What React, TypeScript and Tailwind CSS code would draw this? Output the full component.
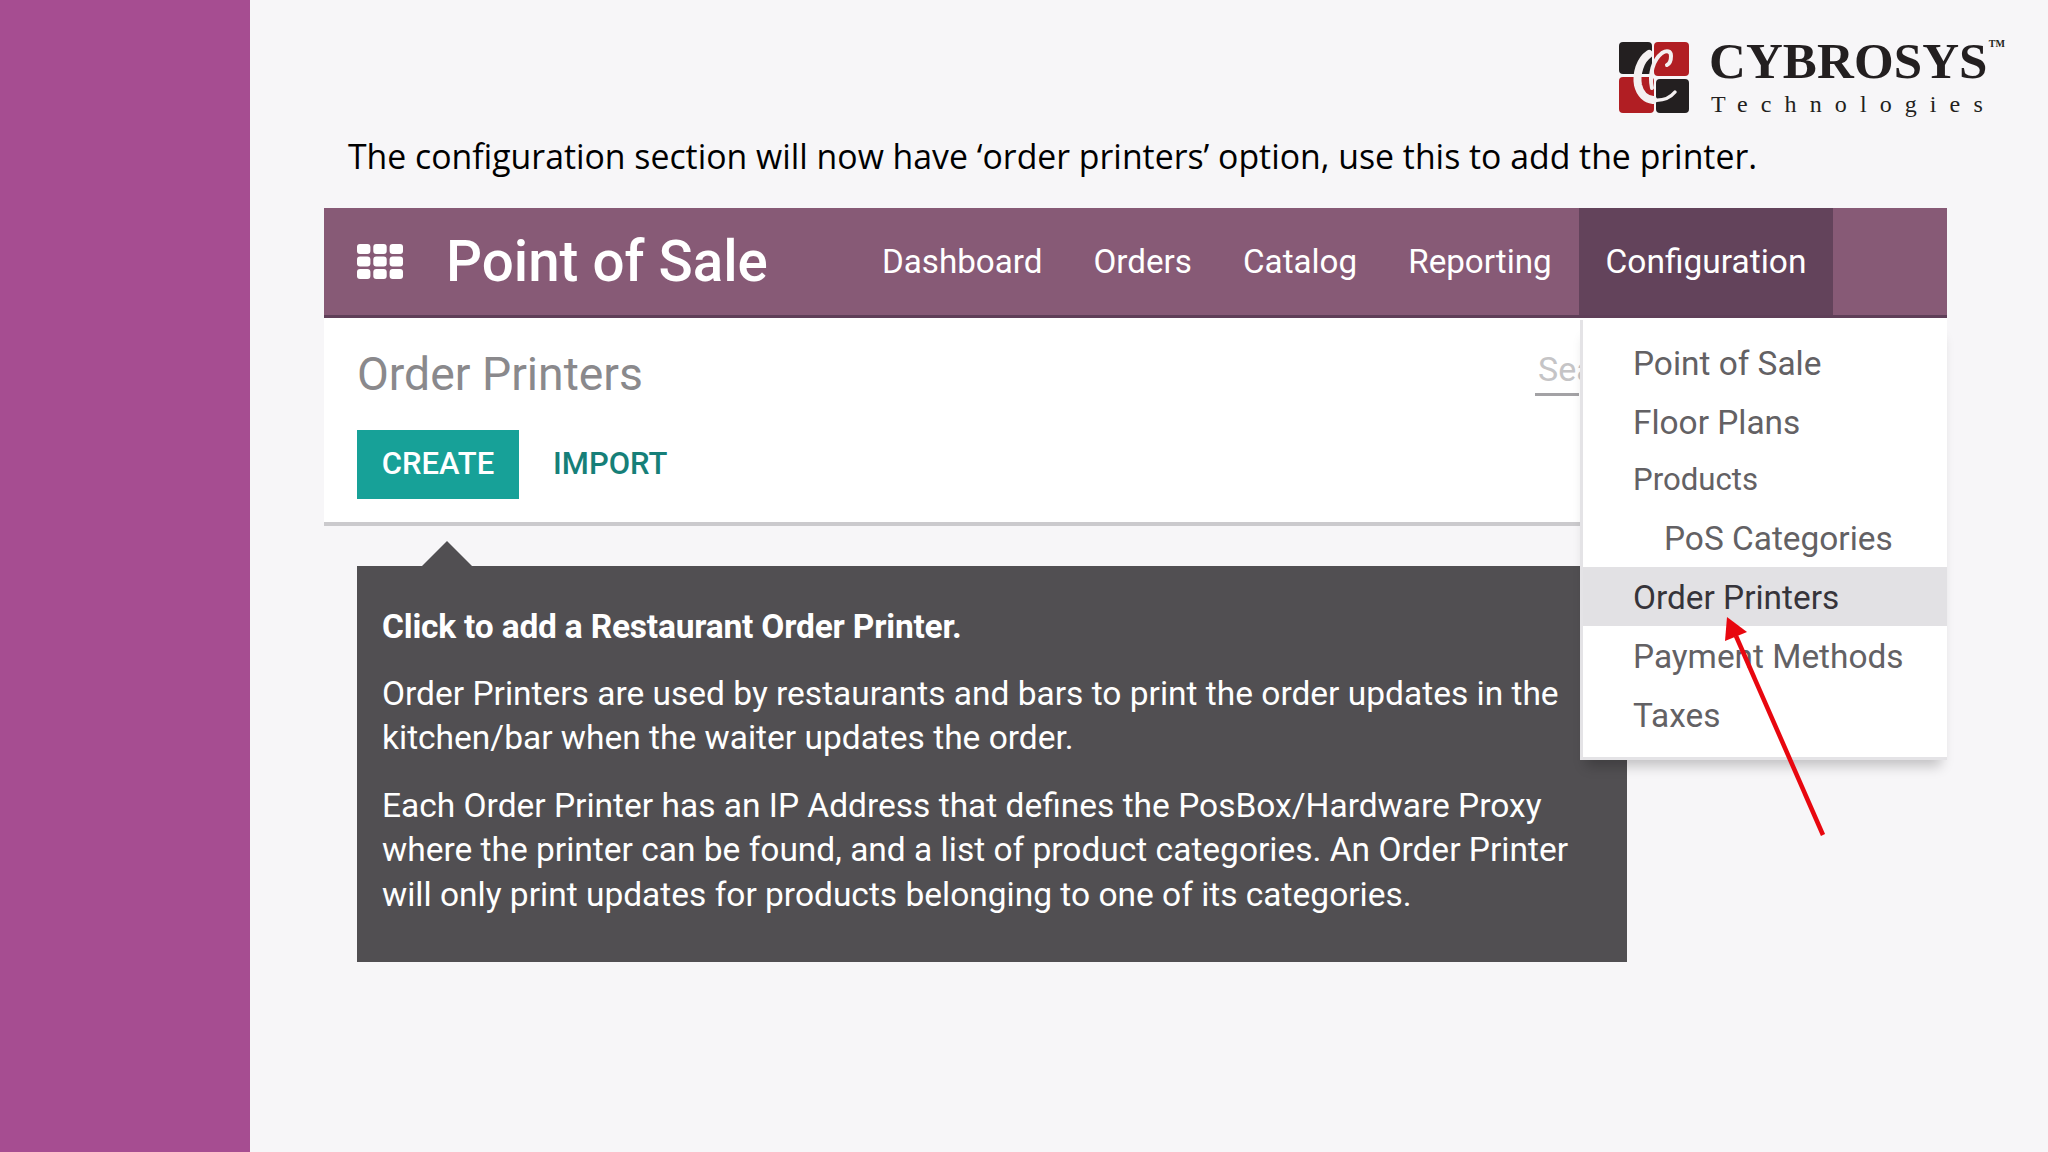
import React from 'react';

const navItems = ['Dashboard', 'Orders', 'Catalog', 'Reporting'];

const menuItems = [
  { label: 'Point of Sale', h: 'h-[59px] pt-[3px]' },
  { label: 'Floor Plans', h: 'h-[59px] pt-[3px]' },
  { label: 'Products', h: 'h-[58px] pt-[1px] text-[31.2px]' },
  { label: 'PoS Categories', h: 'h-[58px] pt-[3px]', indent: true },
  { label: 'Order Printers', h: 'h-[59px] pt-[4px]', active: true },
  { label: 'Payment Methods', h: 'h-[59px] pt-[4px]' },
  { label: 'Taxes', h: 'h-[59px] pt-[4px]' },
];

const CybrosysLogo = () => (
  <div className="flex items-start">
    <svg width="70" height="71" viewBox="0 0 70 71" className="mt-[42px] shrink-0">
      <rect x="0" y="0" width="33" height="32" rx="4" fill="#231f20" />
      <rect x="35" y="0" width="35" height="34" rx="4" fill="#b11e23" />
      <rect x="0" y="35" width="35" height="36" rx="4" fill="#b11e23" />
      <rect x="37" y="37" width="33" height="34" rx="4" fill="#231f20" />
      <path d="M30 12C21 18 17 32 19 43c2 9 8 14 15 15" fill="none" stroke="#f4f0f1" strokeWidth="8" strokeLinecap="round" />
      <path d="M33 46c-3-14 1-28 10-35 5-3 9-2 9 3 0 5-2 8-4 9" fill="none" stroke="#f4f0f1" strokeWidth="4" strokeLinecap="round" />
      <path d="M34 58c9 1 17-2 22-8" fill="none" stroke="#f4f0f1" strokeWidth="3.5" strokeLinecap="round" />
    </svg>
    <div className="relative ml-[20px] mt-[31px] font-['Liberation_Serif',serif] text-[#231f20]">
      <div className="text-[51px] leading-[60px] font-bold tracking-[0.1px] whitespace-nowrap">CYBROSYS</div>
      <div className="mt-[-2px] ml-[2px] text-[24px] leading-[30px] tracking-[13.1px] whitespace-nowrap">Technologies</div>
      <span className="absolute right-[-9px] top-[8px] text-[10px] font-bold leading-none">TM</span>
    </div>
  </div>
);

export default function App() {
  return (
    <div className="flex h-screen w-full overflow-hidden bg-[#f7f6f8] font-['Roboto',sans-serif]">
      <aside className="w-[250px] shrink-0 bg-[#a64d91]" />

      <main className="flex min-w-0 flex-1 flex-col">
        <div className="flex h-[130px] pl-[1369px]">
          <CybrosysLogo />
        </div>

        <p className="ml-[98px] font-['Open_Sans',sans-serif] text-[33.8px] leading-[52px] text-black whitespace-nowrap">
          The configuration section will now have ‘order printers’ option, use this to add the printer.
        </p>

        <section className="relative ml-[74px] mt-[26px] w-[1623px]">
          {/* top bar */}
          <header className="flex h-[110px] items-stretch border-b-[3px] border-[#5f3f58] bg-[#875a76] text-white">
            <div className="flex w-[122px] items-center pl-[33px]">
              <svg width="46" height="35" viewBox="0 0 46 35" fill="#fff">
                {[0, 12.5, 25].map((y) =>
                  [0, 16.3, 32.6].map((x) => <rect key={`${x}-${y}`} x={x} y={y} width="13.4" height="10" rx="3" />)
                )}
              </svg>
            </div>
            <div className="w-[436px] text-[56.5px] font-medium leading-[108px] whitespace-nowrap">Point of Sale</div>
            <nav className="flex w-[697px] items-center gap-[51px] pt-[1px] text-[33.2px]">
              {navItems.map((item) => (
                <span key={item} className="whitespace-nowrap">{item}</span>
              ))}
            </nav>
            <div className="flex w-[254px] items-center justify-center bg-[#63435b] pt-[1px] text-[33.5px] whitespace-nowrap">
              Configuration
            </div>
          </header>

          {/* control panel */}
          <div className="relative h-[208px] border-b-[4px] border-[#cbcacd] bg-white pl-[33px] pt-[30px]">
            <h1 className="text-[46.3px] leading-[52px] text-[#8a898c]">Order Printers</h1>
            <div className="mt-[30px] flex items-center gap-[34px]">
              <button className="flex h-[69px] w-[162px] items-center justify-center bg-[#17a198] text-[31px] font-medium text-white">
                CREATE
              </button>
              <button className="text-[31px] font-medium text-[#167f78]">IMPORT</button>
            </div>
            <div className="absolute left-[1211px] top-[28px] h-[50px] w-[44px] border-b-[3px] border-[#a3a2a5] pl-[3px] text-[34px] leading-[46px] whitespace-nowrap text-[#c5c4c6]">
              Search...
            </div>
          </div>

          {/* help box */}
          <div className="pb-[28px] pl-[33px] pt-[40px]">
            <div className="relative w-[1270px] bg-[#514f52] px-[25px] pb-[45px] pt-[39px] text-[33.5px] leading-[44.5px] text-white">
              <span className="absolute left-[65px] top-[-25px] h-0 w-0 border-x-[25px] border-b-[25px] border-x-transparent border-b-[#514f52]" />
              <p className="font-bold tracking-[-0.2px]">Click to add a Restaurant Order Printer.</p>
              <p className="mt-[22px]">
                Order Printers are used by restaurants and bars to print the order updates in the kitchen/bar when the waiter updates the order.
              </p>
              <p className="mt-[23px]">
                Each Order Printer has an IP Address that defines the PosBox/Hardware Proxy where the printer can be found, and a list of product categories. An Order Printer will only print updates for products belonging to one of its categories.
              </p>
            </div>
          </div>

          {/* configuration dropdown */}
          <div className="absolute left-[1256px] top-[112px] w-[367px] border-b-[3px] border-l-[3px] border-[#e4e3e6] bg-white pb-[13px] pt-[13px] text-[33.4px] text-[#636164] shadow-[0_12px_12px_-6px_rgba(0,0,0,0.22)]">
            {menuItems.map((m) => (
              <div
                key={m.label}
                className={`flex items-center whitespace-nowrap ${m.h} ${m.indent ? 'pl-[81px]' : 'pl-[50px]'} ${m.active ? 'bg-[#e2e1e4] text-[#36343a]' : ''}`}
              >
                {m.label}
              </div>
            ))}
          </div>

          {/* annotation arrow */}
          <svg className="absolute left-[1390px] top-[400px]" width="120" height="240" viewBox="0 0 120 240">
            <line x1="109" y1="227" x2="22" y2="28" stroke="#e8070f" strokeWidth="4.5" />
            <polygon points="13,9 11,33 33,24" fill="#e8070f" />
          </svg>
        </section>
      </main>
    </div>
  );
}
